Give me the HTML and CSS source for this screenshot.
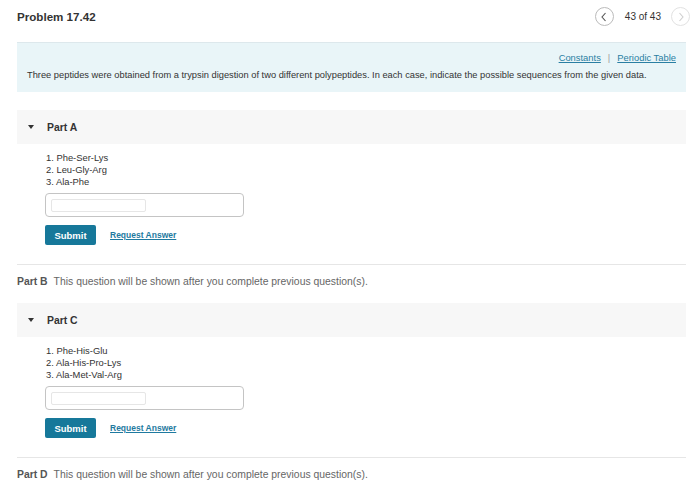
FILE: index.html
```html
<!DOCTYPE html>
<html>
<head>
<meta charset="utf-8">
<link rel="stylesheet" href="styles.css">
</head>
<body>
<div class="page">
  <header class="top">
    <h1 class="title">Problem 17.42</h1>
    <nav class="pager">
      <span class="circ prev"><svg width="8" height="10" viewBox="0 0 8 10"><path d="M5.5 1 L2 5 L5.5 9" fill="none" stroke="#555" stroke-width="1.1"/></svg></span>
      <span class="count">43 of 43</span>
      <span class="circ next"><svg width="8" height="10" viewBox="0 0 8 10"><path d="M2.5 1 L6 5 L2.5 9" fill="none" stroke="#cfcfcf" stroke-width="1.1"/></svg></span>
    </nav>
  </header>

  <section class="info">
    <div class="links"><a href="#">Constants</a><span class="bar">|</span><a href="#">Periodic Table</a></div>
    <p class="intro">Three peptides were obtained from a trypsin digestion of two different polypeptides. In each case, indicate the possible sequences from the given data.</p>
  </section>

  <section class="part">
    <div class="part-head"><span class="tri"></span><span class="part-name">Part A</span></div>
    <div class="part-body">
      <ol class="seq">
        <li>1. Phe-Ser-Lys</li>
        <li>2. Leu-Gly-Arg</li>
        <li>3. Ala-Phe</li>
      </ol>
      <div class="answer"><div class="field"></div></div>
      <div class="actions"><button class="submit">Submit</button><a class="req" href="#">Request Answer</a></div>
    </div>
  </section>

  <div class="locked"><b>Part B</b>This question will be shown after you complete previous question(s).</div>

  <section class="part">
    <div class="part-head"><span class="tri"></span><span class="part-name">Part C</span></div>
    <div class="part-body">
      <ol class="seq">
        <li>1. Phe-His-Glu</li>
        <li>2. Ala-His-Pro-Lys</li>
        <li>3. Ala-Met-Val-Arg</li>
      </ol>
      <div class="answer"><div class="field"></div></div>
      <div class="actions"><button class="submit">Submit</button><a class="req" href="#">Request Answer</a></div>
    </div>
  </section>

  <div class="locked"><b>Part D</b>This question will be shown after you complete previous question(s).</div>
</div>
</body>
</html>
```

FILE: styles.css
```css
html, body {
  margin: 0;
  padding: 0;
  background: #fff;
}
body {
  font-family: "Liberation Sans", Arial, sans-serif;
  color: #333;
  width: 700px;
}
.page {
  padding: 0 14px 0 17px;
}
.top {
  display: flex;
  align-items: center;
  justify-content: space-between;
  height: 32px;
  margin-bottom: 10px;
}
.title {
  margin: 0;
  font-size: 11.6px;
  font-weight: bold;
  color: #333;
  padding-top: 1px;
}
.pager {
  display: flex;
  align-items: center;
  padding-top: 1px;
  margin-right: -4px;
}
.circ {
  width: 17px;
  height: 17px;
  border-radius: 50%;
  border: 1px solid #bbb;
  display: flex;
  align-items: center;
  justify-content: center;
}
.circ.next {
  border-color: #e2e2e2;
}
.count {
  font-size: 10px;
  margin: 0 10px 0 11px;
  color: #333;
}
.info {
  background: #e9f5f8;
  border-top: 1px solid #dde8ec;
  padding: 9px 10px 8px 10px;
  height: 32px;
}
.links {
  text-align: right;
  font-size: 9.4px;
  line-height: 11px;
}
.links a {
  color: #2a7fa3;
  text-decoration: underline;
}
.bar {
  color: #999;
  margin: 0 7px;
}
.intro {
  margin: 7px 0 0 0;
  font-size: 9.3px;
  line-height: 11px;
}
.part {
  margin-top: 18px;
}
.locked + .part {
  margin-top: 15px;
}
.part-head {
  background: #f7f7f7;
  height: 34px;
  display: flex;
  align-items: center;
}
.tri {
  width: 0;
  height: 0;
  border-left: 3px solid transparent;
  border-right: 3px solid transparent;
  border-top: 4px solid #333;
  margin-left: 11px;
  margin-right: 13px;
}
.part-name {
  font-weight: bold;
  font-size: 10.4px;
}
.part-body {
  padding: 8px 0 0 28px;
}
.seq {
  list-style: none;
  margin: 0;
  padding: 0 0 0 1px;
  font-size: 9.4px;
  line-height: 12px;
}
.answer {
  margin-top: 5px;
  width: 192px;
  height: 22px;
  border: 1px solid #c4c4c4;
  border-radius: 4px;
  display: flex;
  align-items: center;
  padding-left: 5px;
}
.field {
  width: 93px;
  height: 11px;
  border: 1px solid #e6e6e6;
  border-radius: 2px;
}
.actions {
  margin-top: 8px;
  display: flex;
  align-items: center;
  height: 20px;
}
.submit {
  background: #16789a;
  color: #fff;
  border: none;
  border-radius: 2px;
  font-family: "Liberation Sans", Arial, sans-serif;
  font-size: 9.5px;
  font-weight: bold;
  width: 51px;
  height: 20px;
  padding: 0;
}
.req {
  margin-left: 14px;
  color: #1f7aa0;
  font-size: 8.5px;
  font-weight: bold;
  text-decoration: underline;
}
.locked {
  margin-top: 19px;
  border-top: 1px solid #e6e6e6;
  padding-top: 11px;
  font-size: 10.4px;
  color: #666;
  line-height: 12px;
}
.locked b {
  color: #555;
  margin-right: 6px;
}
```
